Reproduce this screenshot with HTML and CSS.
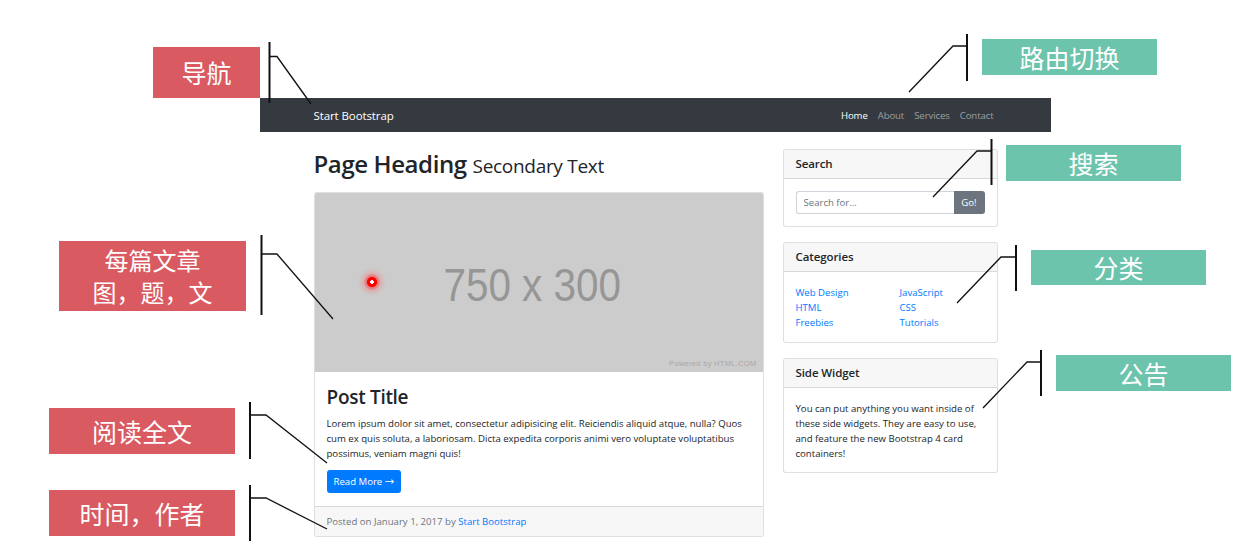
FILE: index.html
```html
<!DOCTYPE html>
<html lang="zh-CN">
<head>
<meta charset="utf-8">
<title>Blog Home - Start Bootstrap</title>
<link rel="stylesheet" href="styles.css">
</head>
<body>
<div class="page">
  <div class="shell">
    <nav class="navbar">
      <div class="container nav-inner">
        <a class="brand" href="#">Start Bootstrap</a>
        <ul class="nav-links">
          <li><a class="active" href="#">Home</a></li>
          <li><a href="#">About</a></li>
          <li><a href="#">Services</a></li>
          <li><a href="#">Contact</a></li>
        </ul>
      </div>
    </nav>

    <div class="container content">
      <main class="main-col">
        <h1 class="page-heading">Page Heading <small>Secondary Text</small></h1>
        <article class="card">
          <div class="placeholder">
            <span class="ph-text">750 x 300</span>
            <span class="ph-powered">Powered by HTML.COM</span>
            <span class="cursor-dot"></span>
          </div>
          <div class="card-body post-body">
            <h2 class="post-title">Post Title</h2>
            <p class="post-text">Lorem ipsum dolor sit amet, consectetur adipisicing elit. Reiciendis aliquid atque, nulla? Quos cum ex quis soluta, a laboriosam. Dicta expedita corporis animi vero voluptate voluptatibus possimus, veniam magni quis!</p>
            <a class="btn-primary" href="#">Read More &rarr;</a>
          </div>
          <div class="card-footer">Posted on January 1, 2017 by <a href="#">Start Bootstrap</a></div>
        </article>
      </main>

      <aside class="side-col">
        <section class="card">
          <h5 class="card-header">Search</h5>
          <div class="card-body side-body">
            <div class="input-group">
              <input class="form-control" type="text" placeholder="Search for...">
              <button class="btn-secondary" type="button">Go!</button>
            </div>
          </div>
        </section>
        <section class="card">
          <h5 class="card-header">Categories</h5>
          <div class="card-body side-body cats">
            <ul class="cat-list">
              <li><a href="#">Web Design</a></li>
              <li><a href="#">HTML</a></li>
              <li><a href="#">Freebies</a></li>
            </ul>
            <ul class="cat-list">
              <li><a href="#">JavaScript</a></li>
              <li><a href="#">CSS</a></li>
              <li><a href="#">Tutorials</a></li>
            </ul>
          </div>
        </section>
        <section class="card">
          <h5 class="card-header">Side Widget</h5>
          <div class="card-body side-body widget">You can put anything you want inside of these side widgets. They are easy to use, and feature the new Bootstrap 4 card containers!</div>
        </section>
      </aside>
    </div>
  </div>

  <svg class="callout-lines" width="1255" height="549" viewBox="0 0 1255 549" aria-hidden="true">
    <g class="vbar">
      <path d="M269.5 42 V103"/>
      <path d="M967 34 V81"/>
      <path d="M991.5 139 V185"/>
      <path d="M1016 245 V291"/>
      <path d="M1041 350 V396"/>
      <path d="M261.5 235 V315"/>
      <path d="M250 402 V459"/>
      <path d="M250 485 V541"/>
    </g>
    <g class="lead">
      <path d="M269.5 56.5 H277 L311 104"/>
      <path d="M967 46 H953 L909 92"/>
      <path d="M991.5 151 H977 L933 197"/>
      <path d="M1016 257 H1001 L957 303"/>
      <path d="M1041 362 H1027 L983 408"/>
      <path d="M261.5 254 H277 L333 319"/>
      <path d="M250 415 H266 L327 463"/>
      <path d="M250 498 H266 L327 529"/>
    </g>
  </svg>

  <div class="label red l-nav">导航</div>
  <div class="label green l-route">路由切换</div>
  <div class="label green l-search">搜索</div>
  <div class="label green l-cat">分类</div>
  <div class="label green l-notice">公告</div>
  <div class="label red l-post"><span class="label-line">每篇文章</span><span class="label-line">图，题，文</span></div>
  <div class="label red l-read">阅读全文</div>
  <div class="label red l-meta">时间，作者</div>
</div>
</body>
</html>
```

FILE: styles.css
```css
* { box-sizing: border-box; }

html, body {
  margin: 0;
  padding: 0;
  background: #ffffff;
}

body {
  font-family: "Open Sans", "Noto Sans", "Noto Sans CJK SC", sans-serif;
  color: #212529;
  width: 1255px;
  height: 549px;
  overflow: hidden;
}

a { text-decoration: none; }
ul { list-style: none; margin: 0; padding: 0; }

.page {
  position: relative;
  width: 1255px;
  height: 549px;
  padding-top: 98px;
}

.shell {
  margin-left: 260px;
  width: 791px;
}

.container {
  width: 684px;
  margin: 0 auto;
}

/* navbar */
.navbar {
  background: #343a40;
  height: 34px;
}

.nav-inner {
  height: 34px;
  display: flex;
  align-items: center;
  justify-content: space-between;
  padding-right: 4px;
}

.brand {
  color: #ffffff;
  font-size: 11.5px;
  letter-spacing: -0.1px;
}

.nav-links {
  display: flex;
  gap: 10px;
  font-size: 9.6px;
  letter-spacing: -0.1px;
}

.nav-links a { color: rgba(255, 255, 255, 0.5); }
.nav-links a.active { color: #ffffff; }

/* content */
.content {
  display: grid;
  grid-template-columns: 450px 215px;
  column-gap: 19px;
  align-items: start;
}

.page-heading {
  margin: 17px 0 11px;
  font-size: 24px;
  line-height: 29px;
  font-weight: 600;
  letter-spacing: -0.4px;
}

.page-heading small {
  font-size: 19px;
  font-weight: 400;
  letter-spacing: -0.3px;
}

.card {
  border: 1px solid rgba(0, 0, 0, 0.125);
  border-radius: 3px;
  background: #ffffff;
  overflow: hidden;
}

.placeholder {
  position: relative;
  height: 179px;
  background: #cccccc;
  display: flex;
  align-items: center;
  justify-content: center;
}

.ph-text {
  display: inline-block;
  font-family: "Liberation Sans", Arial, sans-serif;
  font-size: 47px;
  color: #969696;
  transform: scaleX(0.86);
  margin: 4px 12px 0 0;
}

.ph-powered {
  position: absolute;
  right: 6px;
  bottom: 4px;
  font-family: "Liberation Sans", Arial, sans-serif;
  font-size: 7.5px;
  letter-spacing: 0.3px;
  color: #a8a8a8;
}

.cursor-dot {
  position: absolute;
  left: 43px;
  top: 75px;
  width: 28px;
  height: 28px;
  border-radius: 50%;
  background: radial-gradient(circle, #ffffff 0 1.6px, #ff0000 2px 4.6px, rgba(255, 40, 40, 0.55) 5.5px, rgba(255, 110, 110, 0.25) 9px, rgba(255, 150, 150, 0) 14px);
}

.card-body {
  padding: 12px;
}

.post-body {
  padding: 14px 12px 13px;
}

.post-title {
  margin: 0 0 7px;
  font-size: 19px;
  line-height: 23px;
  font-weight: 600;
  letter-spacing: -0.3px;
}

.post-text {
  margin: 0 0 7px;
  max-width: 420px;
  font-size: 9.6px;
  line-height: 15px;
}

.btn-primary {
  display: inline-block;
  background: #007bff;
  color: #ffffff;
  font-size: 9.6px;
  line-height: 15px;
  padding: 4px 7px;
  border-radius: 3px;
}

.card-footer {
  background: #f7f7f7;
  border-top: 1px solid rgba(0, 0, 0, 0.125);
  padding: 7px 12px;
  font-size: 9.6px;
  line-height: 15px;
  color: #6c757d;
}

.card-footer a { color: #007bff; }

/* sidebar */
.side-col {
  margin-top: 17px;
  display: flex;
  flex-direction: column;
  gap: 15px;
}

.card-header {
  margin: 0;
  padding: 7px 12px;
  background: #f7f7f7;
  border-bottom: 1px solid rgba(0, 0, 0, 0.125);
  font-size: 11.5px;
  line-height: 14px;
  font-weight: 600;
  letter-spacing: -0.1px;
}

.side-body {
  padding: 12px;
  font-size: 9.6px;
  line-height: 15px;
}

.input-group {
  display: flex;
  height: 23px;
}

.form-control {
  flex: 1;
  min-width: 0;
  height: 23px;
  border: 1px solid #ced4da;
  border-right: none;
  border-radius: 3px 0 0 3px;
  padding: 3px 7px;
  font-family: inherit;
  font-size: 9.6px;
  color: #495057;
  outline: none;
}

.form-control::placeholder { color: #6c757d; }

.btn-secondary {
  width: 31px;
  height: 23px;
  border: none;
  border-radius: 0 3px 3px 0;
  background: #6c757d;
  color: #ffffff;
  font-family: inherit;
  font-size: 9.6px;
  padding: 0;
}

.cats {
  padding-top: 13px;
  display: grid;
  grid-template-columns: 104px 1fr;
}

.cat-list a { color: #007bff; }

.widget {
  padding-top: 13px;
  padding-bottom: 11px;
}

/* annotation overlay */
.callout-lines {
  position: absolute;
  left: 0;
  top: 0;
  pointer-events: none;
}

.callout-lines path {
  fill: none;
  stroke: #111111;
}

.vbar path { stroke-width: 2; }
.lead path { stroke-width: 1.3; }

.label {
  position: absolute;
  display: flex;
  align-items: center;
  justify-content: center;
  text-align: center;
  color: #ffffff;
  font-family: "Noto Sans CJK SC", "Noto Sans", sans-serif;
  font-size: 25px;
  line-height: 31px;
}

.red { background: #d95a61; }
.green { background: #6cc4ac; }

.l-nav    { left: 153px;  top: 47px;  width: 107px; height: 51px; }
.l-route  { left: 982px;  top: 39px;  width: 175px; height: 36px; }
.l-search { left: 1006px; top: 145px; width: 175px; height: 36px; }
.l-cat    { left: 1031px; top: 250px; width: 175px; height: 35px; }
.l-notice { left: 1056px; top: 355px; width: 175px; height: 36px; }
.l-post   { left: 59px;   top: 241px; width: 187px; height: 70px; flex-direction: column; gap: 0; }
.l-post .label-line { display: block; font-size: 24px; line-height: 32px; height: 32px; }
.l-read   { left: 49px;   top: 408px; width: 186px; height: 46px; }
.l-meta   { left: 49px;   top: 490px; width: 186px; height: 46px; }
```
